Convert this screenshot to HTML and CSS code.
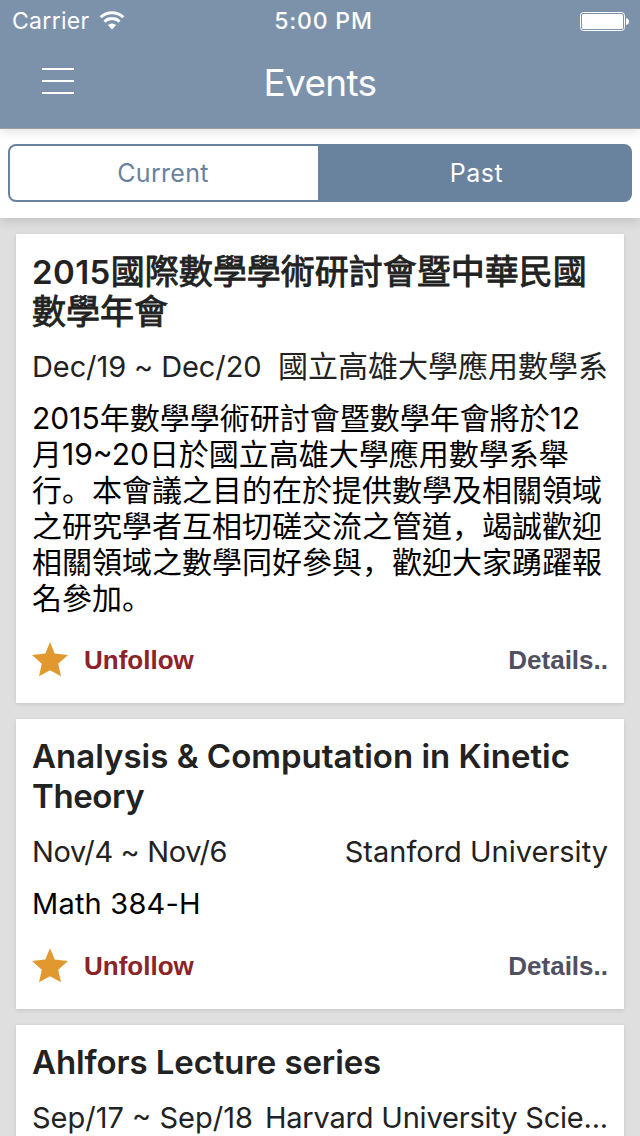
FILE: index.html
```html
<!DOCTYPE html>
<html lang="zh-Hant">
<head>
<meta charset="utf-8">
<title>Events</title>
<link rel="stylesheet" href="styles.css">
</head>
<body>
<div class="screen">
  <header class="topbar">
    <div class="status">
      <div class="carrier"><span class="carrier-name">Carrier</span>
        <svg class="wifi" width="26" height="20" viewBox="0 0 26 20" aria-hidden="true">
          <g fill="none" stroke="#fff" stroke-width="2.9"><path d="M1.7 6.2 A16.5 16.5 0 0 1 24.3 6.2"/><path d="M5.4 10.6 A11 11 0 0 1 20.6 10.6"/></g>
          <path d="M8.9 14 A6.2 6.2 0 0 1 17.1 14 L13 18.4 Z" fill="#fff"/>
        </svg>
      </div>
      <div class="clock">5:00 PM</div>
      <svg class="battery" width="50" height="20" viewBox="0 0 50 20" aria-hidden="true">
        <rect x="1.5" y="1.5" width="44" height="18" rx="3" fill="none" stroke="#fff"/>
        <rect x="3" y="3" width="41" height="15" rx="1.5" fill="#fff"/>
        <path d="M47 7 Q50 7.5 50 10.5 Q50 13.5 47 14 Z" fill="#fff"/>
      </svg>
    </div>
    <div class="nav">
      <svg class="menu" width="32" height="26" viewBox="0 0 32 26" aria-hidden="true"><path d="M0 0h32v2H0zM0 12h32v2H0zM0 24h32v2H0z" fill="#fff"/></svg>
      <h1 class="nav-title">Events</h1>
    </div>
  </header>
  <div class="filter">
    <div class="segments">
      <div class="segment plain">Current</div>
      <div class="segment selected">Past</div>
    </div>
  </div>
  <main class="list">
    <article class="card">
      <h2 class="title title-zh"><span class="num">2015</span>國際數學學術研討會暨中華民國<br>數學年會</h2>
      <div class="meta"><span class="date d1">Dec/19 ~ Dec/20</span><span class="place cjk">國立高雄大學應用數學系</span></div>
      <p class="desc zh"><span class="num">2015</span>年數學學術研討會暨數學年會將於<span class="num">12</span><br>月<span class="num">19~20</span>日於國立高雄大學應用數學系舉<br>行<span class="punct" lang="zh-Hans">。</span>本會議之目的在於提供數學及相關領域<br>之研究學者互相切磋交流之管道<span class="punct" lang="zh-Hans">，</span>竭誠歡迎<br>相關領域之數學同好參與<span class="punct" lang="zh-Hans">，</span>歡迎大家踴躍報<br>名參加<span class="punct" lang="zh-Hans">。</span></p>
      <div class="actions">
        <svg class="star" width="36" height="35" viewBox="0 0 36 35" aria-hidden="true"><path d="M18 0 L22.6 11.6 L36 13 L26.2 21.8 L29 34.3 L18 28.3 L7 34.3 L9.8 21.8 L0 13 L13.4 11.6 Z" fill="#e1992f"/></svg>
        <span class="follow">Unfollow</span><span class="details">Details..</span>
      </div>
    </article>
    <article class="card">
      <h2 class="title title-en">Analysis &amp; Computation in Kinetic<br><span class="a2">Theory</span></h2>
      <div class="meta"><span class="date d2">Nov/4 ~ Nov/6</span><span class="place">Stanford University</span></div>
      <p class="desc math">Math 384-H</p>
      <div class="actions">
        <svg class="star" width="36" height="35" viewBox="0 0 36 35" aria-hidden="true"><path d="M18 0 L22.6 11.6 L36 13 L26.2 21.8 L29 34.3 L18 28.3 L7 34.3 L9.8 21.8 L0 13 L13.4 11.6 Z" fill="#e1992f"/></svg>
        <span class="follow">Unfollow</span><span class="details">Details..</span>
      </div>
    </article>
    <article class="card">
      <h2 class="title title-en a3">Ahlfors Lecture series</h2>
      <div class="meta"><span class="date">Sep/17 ~ Sep/18</span><span class="place p3">Harvard University Scie...</span></div>
    </article>
  </main>
</div>
</body>
</html>
```
FILE: styles.css
```css
* { box-sizing: border-box; }
body { margin: 0; }
.screen {
  width: 640px; height: 1136px; overflow: hidden;
  display: flex; flex-direction: column;
  background: #dfdfdf; color: #222;
  font-family: Inter, "Noto Sans CJK TC", sans-serif;
  white-space: nowrap;
}
h1, h2, p { margin: 0; font-weight: 400; }
svg { display: block; flex: none; }

.topbar {
  flex: none; height: 129px; background: #7c92ab;
  border-bottom: 1px solid #a09f9f;
  box-shadow: 0 2px 10px rgba(0,0,0,.14);
  color: #fff; z-index: 2;
}
.status {
  height: 40px; padding: 2px 11px 0 12px;
  display: grid; grid-template-columns: 1fr auto 1fr; align-items: center;
  font-size: 23px; line-height: 38px;
}
.carrier { display: flex; align-items: center; gap: 9px; }
.carrier-name { letter-spacing: .3px; }
.clock { font-weight: 500; letter-spacing: .8px; padding-left: 6px; }
.battery { justify-self: end; margin-top: -1px; }
.nav {
  height: 88px; padding: 0 42px;
  display: grid; grid-template-columns: 1fr auto 1fr; align-items: center;
}
.menu { margin-top: -6px; }
.nav-title { font-size: 37px; line-height: 86px; height: 88px; letter-spacing: -.7px; }

.filter {
  flex: none; height: 89px; padding: 15px 8px 16px; background: #fff;
  box-shadow: 0 2px 12px rgba(0,0,0,.16); z-index: 1;
}
.segments {
  height: 58px; padding: 2px; display: grid; grid-template-columns: 308px 1fr;
  background: #69829d; border-radius: 8px;
  font-size: 25px; line-height: 54px; text-align: center; color: #69829d;
}
.plain { background: #fff; border-radius: 6px 0 0 6px; letter-spacing: .3px; padding-right: 2px; }
.selected { color: #fff; letter-spacing: .5px; padding-left: 5px; }

.list { flex: none; padding: 16px; display: flex; flex-direction: column; gap: 16px; }
.card {
  padding: 18px 16px 25px; background: #fff;
  box-shadow: 0 1px 4px rgba(0,0,0,.12);
}
.title { font-size: 33px; line-height: 40px; font-weight: 600; margin-bottom: 17px; }
.title-en { margin-top: -1px; margin-bottom: 18px; }
.title-zh { font-size: 34px; font-weight: 400; -webkit-text-stroke: .9px #222; }
.title-zh .num { font-size: 33px; font-weight: 600; letter-spacing: .4px; -webkit-text-stroke: 0; }
.a2 { letter-spacing: -.4px; }
.a3 { letter-spacing: -.1px; }
.meta {
  height: 36px; line-height: 36px; font-size: 29px; margin-bottom: 16px;
  display: flex; justify-content: space-between;
}
.d1 { letter-spacing: -.1px; }
.d2 { letter-spacing: -.35px; }
.p3 { letter-spacing: -.2px; }
.cjk { font-size: 30px; line-height: 34px; }
.desc { font-size: 29px; line-height: 36px; color: #000; margin-bottom: 26px; }
.math { letter-spacing: .2px; }
.zh { font-size: 30px; height: 216px; margin-top: -1px; }
.punct { font-family: "Noto Sans CJK SC", sans-serif; line-height: 0; }
.desc .num { font-size: 30px; }
.actions {
  height: 36px; display: flex; align-items: center;
  font: bold 26px/36px "Liberation Sans", sans-serif;
}
.star { margin-top: -2px; }
.follow { margin-left: 16px; color: #8b2328; }
.details { margin-left: auto; color: #505061; }
```
